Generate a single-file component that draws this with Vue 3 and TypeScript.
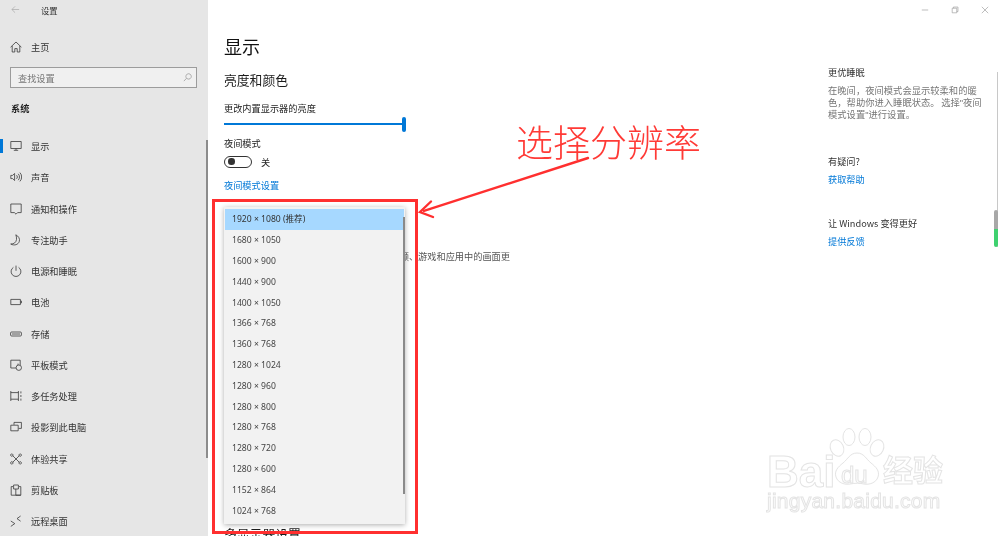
<script setup lang="ts">
interface NavItem { label: string; paths: string[]; active?: boolean }
const nav: NavItem[] = [
  { label: '显示', active: true, paths: ['M.8 1.5h10.4v7H.8z', 'M6 8.5v1.7', 'M3.8 10.3h4.4'] },
  { label: '声音', paths: ['M2.6 4.4H.8v3.2h1.8l2 1.9V2.5z', 'M6.6 4.2a2.6 2.6 0 0 1 0 3.6', 'M8.2 2.8a4.6 4.6 0 0 1 0 6.4', 'M9.9 1.6a6.4 6.4 0 0 1 0 8.8'] },
  { label: '通知和操作', paths: ['M.8 1h10.4v8.6H7.6L6 11.2 4.4 9.6H.8z'] },
  { label: '专注助手', paths: ['M5.8.8c2.8 1.4 4.3 4 3.5 6.6-.9 3.1-4.8 4.7-8.6 2.6 3.1.2 5.4-1.6 5.8-4.4.2-1.7-.1-3.4-.7-4.8z'] },
  { label: '电源和睡眠', paths: ['M3.4 2.4a4.9 4.9 0 1 0 5.2 0', 'M6 .6v5.2'] },
  { label: '电池', paths: ['M.8 3.4h9.6v5.2H.8z', 'M10.4 5h1v2h-1'] },
  { label: '存储', paths: ['M1.6 4h8.8a1 1 0 0 1 1 1v2a1 1 0 0 1-1 1H1.6a1 1 0 0 1-1-1V5a1 1 0 0 1 1-1z', 'M2 6h8'] },
  { label: '平板模式', paths: ['M6 9H.8V1.2h9.4V6', 'M8.8 6a2.7 2.7 0 1 0 0 5.4 2.7 2.7 0 0 0 0-5.4z', 'M8 6V4.6'] },
  { label: '多任务处理', paths: ['M.8 1v10', 'M8.4 1v10', 'M.8 2.6h7.6', 'M.8 9.2h7.6', 'M10.9 1.4v2', 'M10.9 5v2', 'M10.9 8.6v2'] },
  { label: '投影到此电脑', paths: ['M4 3.8V1.4h7.4v6H8.6', 'M.8 4.2h7.4v5.6H.8z'] },
  { label: '体验共享', paths: ['M2.6 2.6l6.8 6.8', 'M9.4 2.6l-6.8 6.8', 'M1.8 .9a1.2 1.2 0 1 0 .01 0z', 'M10.2 .9a1.2 1.2 0 1 0 .01 0z', 'M1.8 8.7a1.2 1.2 0 1 0 .01 0z', 'M10.2 8.7a1.2 1.2 0 1 0 .01 0z'] },
  { label: '剪贴板', paths: ['M3 2.6H1.2v8.6h9.6V2.6H9', 'M3.6 1h4.8v4H3.6z', 'M5.8 5v6.2h5'] },
  { label: '远程桌面', paths: ['M.8 6l4 2.6-4 2.8', 'M10.6 1L7 3.6l3.6 2.6'] },
]
const resolutions: string[] = ['1920 × 1080 (推荐)', '1680 × 1050', '1600 × 900', '1440 × 900', '1400 × 1050', '1366 × 768', '1360 × 768', '1280 × 1024', '1280 × 960', '1280 × 800', '1280 × 768', '1280 × 720', '1280 × 600', '1152 × 864', '1024 × 768']
</script>

<template>
  <div class="window">
    <aside class="sidebar">
      <div class="titlebar">
        <svg class="back" viewBox="0 0 10 10"><path d="M9 5H1M4.5 1.5L1 5l3.5 3.5" /></svg>
        <span>设置</span>
      </div>
      <div class="home">
        <svg class="icon" viewBox="0 0 12 12"><path d="M.6 6.2L6 1l5.4 5.2M2.2 5v6h2.6V7.6h2.4V11h2.6V5" /></svg>
        <span>主页</span>
      </div>
      <div class="search">
        <span>查找设置</span>
        <svg viewBox="0 0 10 10"><path d="M6.2 .8a3 3 0 1 0 .01 0zM4 5.8L1 9" /></svg>
      </div>
      <div class="group">系统</div>
      <nav class="nav">
        <div v-for="item in nav" :key="item.label" class="nav-item" :class="{ active: item.active }">
          <svg class="icon" viewBox="0 0 12 12"><path v-for="d in item.paths" :key="d" :d="d" /></svg>
          <span>{{ item.label }}</span>
        </div>
      </nav>
      <div class="side-scroll"></div>
    </aside>

    <main class="content">
      <h1>显示</h1>
      <h2 class="brightness">亮度和颜色</h2>
      <p class="t-change">更改内置显示器的亮度</p>
      <div class="slider"><div class="thumb"></div></div>
      <p class="t-night">夜间模式</p>
      <div class="toggle-row">
        <div class="toggle"><i></i></div>
        <span>关</span>
      </div>
      <a class="link night-link">夜间模式设置</a>
      <p class="hdr">让支持 HDR 的视频、游戏和应用中的画面更</p>
      <h2 class="multi">多显示器设置</h2>
    </main>

    <aside class="info">
      <div class="controls">
        <span><svg viewBox="0 0 10 10"><path d="M1 5h8" /></svg></span>
        <span><svg viewBox="0 0 10 10"><path d="M1.5 2.8h5.7v5.7H1.500zM3 2.800V1.300h5.700V7H7.200" /></svg></span>
        <span><svg viewBox="0 0 10 10"><path d="M1 1l8 8M9 1L1 9" /></svg></span>
      </div>
      <h3 class="sleep">更优睡眠</h3>
      <p class="desc">在晚间，夜间模式会显示较柔和的暖<br />色，帮助你进入睡眠状态。 选择"夜间<br />模式设置"进行设置。</p>
      <h3 class="question">有疑问?</h3>
      <a class="link help-link">获取帮助</a>
      <h3 class="better">让 Windows 变得更好</h3>
      <a class="link sub-link">提供反馈</a>
    </aside>

    <div class="page-track"></div>
    <div class="page-thumb"></div>

    <div class="dropdown">
      <div v-for="(r, i) in resolutions" :key="r" class="option" :class="{ selected: i === 0 }">{{ r }}</div>
      <div class="drop-scroll"></div>
    </div>

    <div class="red-box"></div>
    <div class="note">选择分辨率</div>
    <svg class="arrow" viewBox="0 0 1000 536">
      <path class="arrow-shaft" d="M588 158 L424 210.800" />
      <path class="arrow-shaft" d="M431 201.500 L420 212 L433 217" />
    </svg>

    <div class="watermark">
      <span class="wm-bai">Bai</span>
      <svg class="wm-paw" viewBox="0 0 60 60">
        <ellipse cx="10" cy="20" rx="6.500" ry="8.500" transform="rotate(-25 10 20)" />
        <ellipse cx="22" cy="9" rx="6" ry="8.500" />
        <ellipse cx="38" cy="9" rx="6" ry="8.500" />
        <ellipse cx="50" cy="20" rx="6.500" ry="8.500" transform="rotate(25 50 20)" />
        <path d="M30 25c-7 0-9 6-14 10-5 4-9 8-7 14 2 6 9 8 14 7 5-1 10-1 14 0 5 1 12-1 14-7 2-6-2-10-7-14-5-4-7-10-14-10z" />
      </svg>
      <span class="wm-du">du</span>
      <span class="wm-cn">经验</span>
      <span class="wm-url">jingyan.baidu.com</span>
    </div>
  </div>
</template>

<style>
html, body { margin: 0; padding: 0; background: #fff; }
</style>

<style scoped>
.window {
  position: relative;
  display: flex;
  width: 1000px;
  height: 536px;
  overflow: hidden;
  background: #fff;
  color: #222;
  font-family: "Noto Sans CJK SC", "Noto Sans", sans-serif;
  font-size: 9.2px;
  line-height: 12px;
  filter: blur(0.45px);
}
h1, h2, h3, p { margin: 0; font-weight: 400; }
h3 { font-size: 9.2px; }

.sidebar { position: relative; flex: none; width: 208px; background: #e6e6e6; color: #333; }
.icon { flex: none; width: 12px; height: 12px; fill: none; stroke: #3a3a3a; stroke-width: .8; }
.titlebar { display: flex; align-items: center; height: 19.500px; padding-left: 11px; font-size: 8.300px; }
.back { width: 9px; height: 9px; margin-right: 21px; fill: none; stroke: #aaa; stroke-width: .8; }
.home { display: flex; align-items: center; gap: 9px; height: 16px; margin-top: 19.500px; padding-left: 10px; }
.search {
  display: flex; align-items: center; justify-content: space-between;
  box-sizing: border-box; width: 187px; height: 21px; margin: 12px 0 0 10px; padding: 0 4px 0 7px;
  border: 1.500px solid #9c9c9c; background: #f0f0f0; color: #777;
}
.search svg { width: 9px; height: 9px; fill: none; stroke: #888; stroke-width: .7; }
.group { margin: 14px 0 0 11px; font-weight: 700; color: #222; }
.nav { margin-top: 16.400px; }
.nav-item { position: relative; display: flex; align-items: center; gap: 9px; height: 31.250px; padding-left: 10px; }
.nav-item.active::before { content: ""; position: absolute; left: 0; top: 8.500px; width: 3px; height: 14px; background: #0078d7; }
.side-scroll { position: absolute; left: 206px; top: 140px; width: 1.500px; height: 318px; background: #8c8c8c; }

.content { flex: none; width: 620px; padding: 33.500px 0 0 16px; box-sizing: border-box; }
h1 { font-size: 18px; line-height: 24px; color: #111; }
h2 { font-size: 12.800px; line-height: 18px; color: #1c1c1c; }
.brightness { margin-top: 13.500px; }
.t-change { margin-top: 13px; }
.slider { position: relative; width: 181px; height: 16px; margin-top: 2px; }
.slider::before { content: ""; position: absolute; left: 0; right: 2px; top: 7px; height: 1.600px; background: #0078d7; }
.thumb { position: absolute; left: 178px; top: 1px; width: 4px; height: 15px; border-radius: 2px; background: #0078d7; }
.t-night { margin-top: 4.500px; }
.toggle-row { display: flex; align-items: center; gap: 9px; height: 13px; margin-top: 6.500px; }
.toggle { box-sizing: border-box; display: flex; align-items: center; width: 28px; height: 12px; padding-left: 3px; border: 1.200px solid #333; border-radius: 6px; }
.toggle i { width: 6.500px; height: 6.500px; border-radius: 50%; background: #333; }
.link { display: block; color: #0078d7; }
.night-link { margin-top: 11px; }
.hdr { width: 286px; margin-top: 59px; text-align: right; white-space: nowrap; color: #555; }
.multi { margin-top: 263px; }

.info { flex: 1; min-width: 0; color: #333; }
.controls { display: flex; justify-content: flex-end; height: 20px; }
.controls span { display: flex; align-items: center; justify-content: center; width: 30px; }
.controls svg { width: 8px; height: 8px; fill: none; stroke: #999; stroke-width: .8; }
.sleep { margin-top: 46px; }
.desc { margin-top: 7px; line-height: 12px; color: #777; font-size: 9.300px; word-spacing: -1px; white-space: nowrap; font-family: "Liberation Sans", "Noto Sans CJK SC", sans-serif; }
.question { margin-top: 34px; }
.help-link { margin-top: 5.500px; }
.sub-link { margin-top: 6px; }
.better { margin-top: 32.500px; }
.page-track { position: absolute; left: 997px; top: 72px; width: 1px; height: 175px; background: #c8c8c8; }
.page-thumb { position: absolute; left: 994px; top: 210px; width: 4px; height: 37px; border-radius: 2px; background: linear-gradient(#a8a8a8 50%, #3fd16f 52%); }

.dropdown {
  position: absolute; left: 224px; top: 207px; box-sizing: border-box; width: 181px; height: 317px;
  padding: 2.300px 1px; background: #f2f2f2; box-shadow: 0 1px 5px rgba(0, 0, 0, .32); color: #444;
}
.option { box-sizing: border-box; height: 20.820px; padding-left: 7px; line-height: 20.820px; font-size: 8.600px; font-family: "Noto Sans", "Noto Sans CJK SC", sans-serif; }
.option.selected { background: #a6d8ff; color: #333; }
.drop-scroll { position: absolute; left: 179px; top: 10px; width: 1.500px; height: 277px; background: #8a8a8a; }

.red-box { position: absolute; left: 212px; top: 199px; box-sizing: border-box; width: 206px; height: 335px; border: 3px solid #ff2f2f; }
.note { position: absolute; left: 516px; top: 117px; font-size: 37px; line-height: 48px; color: #ff3a36; white-space: nowrap; font-weight: 300; }
.arrow { position: absolute; left: 0; top: 0; width: 1000px; height: 536px; pointer-events: none; }
.arrow-shaft { fill: none; stroke: #ff2f2f; stroke-width: 2.400; stroke-linecap: round; stroke-linejoin: miter; }

.watermark { position: absolute; left: 760px; top: 425px; width: 200px; height: 95px; font-family: "Liberation Sans", sans-serif; }
.watermark span { position: absolute; color: #fff; -webkit-text-stroke: 1px #e4e4e4; white-space: nowrap; line-height: 1; }
.watermark .wm-bai { left: 7px; top: 29.500px; font-size: 44px; font-weight: 700; line-height: 33px; }
.wm-paw { position: absolute; left: 67px; top: 3px; width: 60px; height: 60px; fill: #fff; stroke: #e4e4e4; stroke-width: 1; }
.wm-du { left: 81px; top: 38px; font-size: 24px; font-weight: 400; }
.watermark .wm-cn { left: 123px; top: 28px; font-size: 30px; font-family: "Noto Sans CJK SC", sans-serif; font-weight: 700; }
.wm-url { left: 7px; top: 65px; font-size: 21px; letter-spacing: .25px; }
</style>
